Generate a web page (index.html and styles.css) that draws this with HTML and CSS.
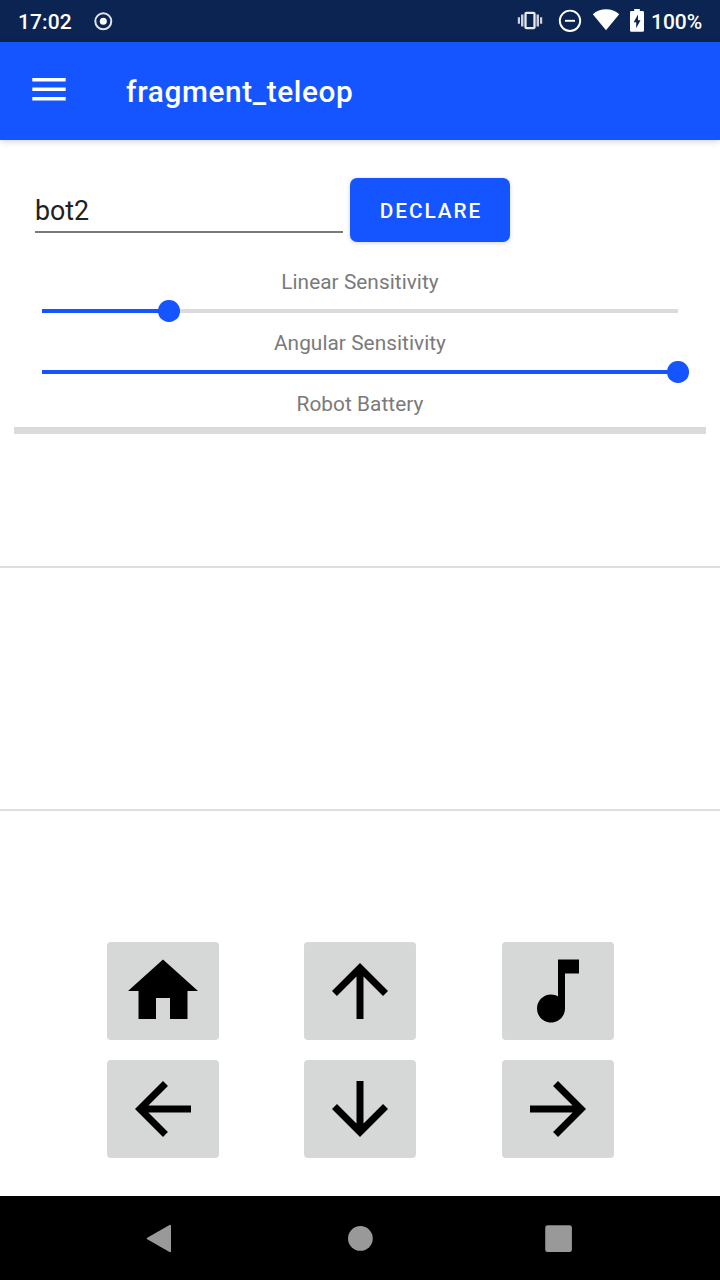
FILE: index.html
```html
<!DOCTYPE html>
<html lang="en">
<head>
<meta charset="utf-8">
<title>fragment_teleop</title>
<link rel="stylesheet" href="styles.css">
</head>
<body>
<div class="screen">
  <div class="status-bar">
    <span class="clock">17:02</span>
    <svg class="record" width="20" height="20" viewBox="0 0 20 20"><circle cx="10.300" cy="10.300" r="8" fill="none" stroke="#e1e4eb" stroke-width="2"/><circle cx="10.300" cy="10.300" r="3.500" fill="#fff"/></svg>
    <svg class="status-icons" width="128" height="36" viewBox="0 0 128 36">
      <g fill="#ccd1da"><path d="M1.800 17.300h2.200v6.400H1.800zM5 14.500h2.500v12H5zM20.500 14.500h2.500v12h-2.500zM24 17.300h2.200v6.400H24z"/></g>
      <rect x="9.500" y="12.800" width="9" height="15.400" rx="1" fill="none" stroke="#e8ebf0" stroke-width="2.300"/>
      <g fill="none" stroke="#fff" stroke-width="1.900"><circle cx="54" cy="20.800" r="10.200"/><path d="M49 20.800h10"/></g>
      <path d="M90 30.200L76.800 14.200c3.600-3.200 8-4.900 13.200-4.900s9.600 1.700 13.200 4.900z" fill="#fff"/>
      <path d="M118.200 9h5.600v2.100h2.800q1.400 0 1.400 1.400v17.900q0 1.400-1.400 1.400h-11.200q-1.400 0-1.400-1.400V12.500q0-1.400 1.400-1.400h2.800z" fill="#fff"/>
      <path d="M122 14.500l-4.300 7.800h2.500v6l4.300-8h-2.500z" fill="#0c2451"/>
    </svg>
    <span class="percent">100%</span>
  </div>
  <header class="toolbar">
    <svg class="menu" width="34" height="24" viewBox="0 0 34 24"><path d="M.3 0h33.400v3.500H.3zM.3 9.500h33.400v3.500H.3zM.3 19h33.400v3.600H.3z" fill="#fff"/></svg>
    <h1 class="title">fragment_teleop</h1>
  </header>
  <main class="content">
    <div class="declare-row">
      <div class="name-field">bot2</div>
      <button class="declare">DECLARE</button>
    </div>
    <div class="label">Linear Sensitivity</div>
    <div class="slider"><div class="track"><div class="fill" style="width:20%"><i class="thumb"></i></div></div></div>
    <div class="label">Angular Sensitivity</div>
    <div class="slider"><div class="track"><div class="fill" style="width:100%"><i class="thumb"></i></div></div></div>
    <div class="label">Robot Battery</div>
    <div class="battery"></div>
    <div class="panel"></div>
    <div class="controls">
      <button class="key"><svg viewBox="0 0 24 24"><path d="M10 20v-6h4v6h5v-8h3L12 3 2 12h3v8z"/></svg></button>
      <button class="key"><svg viewBox="0 0 24 24"><path d="M4 12l1.410 1.410L11 7.830V20h2V7.830l5.580 5.590L20 12l-8-8-8 8z"/></svg></button>
      <button class="key"><svg viewBox="0 0 24 24"><path d="M12 3v10.550c-.59-.34-1.270-.55-2-.55-2.210 0-4 1.790-4 4s1.790 4 4 4 4-1.790 4-4V7h4V3h-6z"/></svg></button>
      <button class="key"><svg viewBox="0 0 24 24"><path d="M20 11H7.830l5.590-5.590L12 4l-8 8 8 8 1.410-1.410L7.830 13H20v-2z"/></svg></button>
      <button class="key"><svg viewBox="0 0 24 24"><path d="M20 12l-1.410-1.410L13 16.170V4h-2v12.170l-5.580-5.590L4 12l8 8 8-8z"/></svg></button>
      <button class="key"><svg viewBox="0 0 24 24"><path d="M12 4l-1.410 1.410L16.170 11H4v2h12.170l-5.580 5.590L12 20l8-8z"/></svg></button>
    </div>
  </main>
  <nav class="nav-bar">
    <svg width="28" height="30" viewBox="0 0 28 30"><path d="M2.700 15.500L25 2.800v25.400z" fill="#999" stroke="#999" stroke-width="2" stroke-linejoin="round"/></svg>
    <svg width="28" height="30" viewBox="0 0 28 30"><circle cx="14.400" cy="15.400" r="12.400" fill="#999"/></svg>
    <svg width="28" height="30" viewBox="0 0 28 30"><rect x="-1.800" y="2.200" width="26.700" height="26.700" rx="2.500" fill="#999"/></svg>
  </nav>
</div>
</body>
</html>
```
FILE: styles.css
```css
* { box-sizing: border-box; }
body { margin: 0; background: #fff; font-family: Roboto, "Liberation Sans", sans-serif; }
button { border: 0; padding: 0; font-family: inherit; }
svg { display: block; }
.screen { width: 720px; height: 1280px; display: flex; flex-direction: column; overflow: hidden; }
.status-bar {
  height: 42px; flex: none; display: flex; align-items: flex-start;
  padding: 0 18px; background: #0c2451; color: #fff;
  font-size: 21px; font-weight: 500; line-height: 44px;
}
.clock { width: 75px; letter-spacing: .1px; }
.record { margin-top: 11px; }
.status-icons { margin: 0 0 0 auto; }
.percent { width: 51px; margin-left: 7px; white-space: nowrap; }
.toolbar {
  height: 98px; flex: none; display: flex; align-items: flex-start;
  padding: 0 32px; background: #1455ff; color: #fff;
  box-shadow: 0 1px 7px rgba(0, 0, 0, .2);
}
.menu { margin-top: 36px; }
.title { margin: 0 0 0 60px; font-size: 29.750px; font-weight: 500; line-height: 100px; letter-spacing: .63px; }
.content { flex: 1; }
.declare-row { height: 128px; display: flex; padding: 38px 0 0 35px; gap: 7px; }
.name-field {
  width: 308px; height: 55px; padding-top: 13px; border-bottom: 2px solid #7a7a7a;
  font-size: 26.800px; line-height: 40px; color: #212121;
}
.declare {
  width: 160px; height: 64px; border-radius: 7px; background: #1455ff; color: #fff;
  font-size: 20.800px; font-weight: 500; letter-spacing: 1.950px; padding: 1px 0 0 2px;
  box-shadow: 0 1px 4px rgba(0, 0, 0, .18);
}
.label { height: 28px; line-height: 28px; text-align: center; font-size: 20.800px; letter-spacing: .050px; color: #7a7a7a; }
.slider { height: 33px; padding: 13px 42px 0; }
.track { height: 4px; background: #dbdbdb; }
.fill { height: 4px; background: #1455ff; position: relative; }
.thumb { position: absolute; right: -10.700px; top: -8.700px; width: 21.400px; height: 21.400px; border-radius: 50%; background: #1455ff; }
.battery { height: 7px; margin: 9px 14px 0; background: #dbdbdb; }
.panel { height: 245px; margin-top: 132px; border-top: 2px solid #dedede; border-bottom: 2px solid #dedede; }
.controls {
  display: grid; grid-template-columns: repeat(3, 112px); column-gap: 85.500px; row-gap: 20px;
  justify-content: center; margin-top: 131px;
}
.key { height: 98px; border-radius: 4px; background: #d6d8d7; display: flex; align-items: center; justify-content: center; }
.key svg { width: 84px; height: 84px; }
.nav-bar { height: 84px; flex: none; background: #000; display: flex; gap: 173px; padding: 27px 0 0 145px; }
.nav-bar svg { overflow: visible; }
```
